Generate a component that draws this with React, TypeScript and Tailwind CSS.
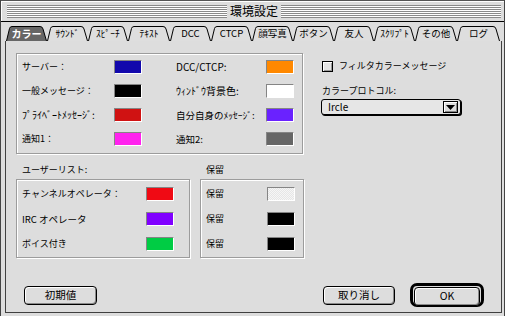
import React from 'react';

const tabs = [
  { label: 'カラー', w: 41, cls: 'w-[41px]', active: true },
  { label: 'ｻｳﾝﾄﾞ', w: 41, cls: 'w-[41px]' },
  { label: 'ｽﾋﾟｰﾁ', w: 40, cls: 'w-[40px]' },
  { label: 'ﾃｷｽﾄ', w: 42, cls: 'w-[42px]' },
  { label: 'DCC', w: 41, cls: 'w-[41px]' },
  { label: 'CTCP', w: 41, cls: 'w-[41px]' },
  { label: '顔写真', w: 41, cls: 'w-[41px]' },
  { label: 'ボタン', w: 41, cls: 'w-[41px]' },
  { label: '友人', w: 40, cls: 'w-[40px]' },
  { label: 'ｽｸﾘﾌﾟﾄ', w: 41, cls: 'w-[41px]' },
  { label: 'その他', w: 42, cls: 'w-[42px]' },
  { label: 'ログ', w: 43, cls: 'w-[43px]' },
];

// [label, label size, swatch, label, label size, swatch]
const colorRows = [
  ['サーバー：', 'text-[9px]', 'bg-[#1208ac]', 'DCC/CTCP:', 'text-[10px]', 'bg-[#ff8800]'],
  ['一般メッセージ：', 'text-[9px]', 'bg-black', 'ｳｨﾝﾄﾞｳ背景色:', 'text-[10px]', 'bg-white'],
  ['ﾌﾟﾗｲﾍﾞｰﾄﾒｯｾｰｼﾞ:', 'text-[10px]', 'bg-[#d01212]', '自分自身のﾒｯｾｰｼﾞ:', 'text-[9.5px]', 'bg-[#6a22ff]'],
  ['通知1：', 'text-[9px]', 'bg-[#ff22ee]', '通知2:', 'text-[9.5px]', 'bg-[#666666]'],
];

const userRows = [
  ['チャンネルオペレータ：', 'text-[9px]', 'bg-[#f00a14]'],
  ['IRC オペレータ', 'text-[9.5px]', 'bg-[#8000ff]'],
  ['ボイス付き', 'text-[9px]', 'bg-[#00cc44]'],
];

const holdRows = [
  ['保留', 'bg-[repeating-conic-gradient(#e6e6e6_0_25%,#f6f6f6_0_50%)] bg-[length:2px_2px]'],
  ['保留', 'bg-black'],
  ['保留', 'bg-black'],
];

function Swatch({ c }: { c: string }) {
  return (
    <div
      className={`h-[14px] w-[28px] border border-t-[#858585] border-l-[#858585] border-b-white border-r-white ${c}`}
    />
  );
}

function Tab({ label, w, cls, active }: { label: string; w: number; cls: string; active?: boolean }) {
  const d = `M0.5 15 L3.5 2.5 Q4 0.5 6 0.5 L${w - 7} 0.5 Q${w - 4.5} 0.5 ${w - 4} 3 L${w - 0.5} 15`;
  return (
    <div className={`relative flex h-[15px] items-center justify-center ${cls}`}>
      <svg className="absolute inset-0" width={w} height={15} viewBox={`0 0 ${w} 15`}>
        <path d={d} fill={active ? '#666666' : '#dedede'} stroke="#000" strokeWidth={1} />
      </svg>
      <span
        className={`relative pt-[1px] leading-none ${
          active ? 'text-[10px] font-bold text-white' : 'text-[9.5px] text-black'
        }`}
      >
        {label}
      </span>
    </div>
  );
}

function MacButton({ label, cls }: { label: string; cls: string }) {
  return (
    <div
      className={`flex h-[19px] items-center justify-center rounded-[4px] border border-black bg-[#dddddd] text-[10.5px] leading-none shadow-[inset_1px_1px_0_#fff,inset_-1px_-1px_0_#8a8a8a] ${cls}`}
    >
      {label}
    </div>
  );
}

const groupBox =
  'border border-[#9c9c9c] shadow-[1px_1px_0_#fff,inset_1px_1px_0_#fff]';

export default function App() {
  return (
    <div className="h-[316px] w-[505px] overflow-hidden border-x border-[#444] bg-[#dddddd] font-['Noto_Sans_CJK_JP','Noto_Sans',sans-serif] text-black">
      {/* title bar */}
      <div className="flex h-[22px] items-center border-y border-t-[#555] border-b-black pl-[6px] pr-[3px] shadow-[inset_1px_1px_0_#fff]">
        <div className="h-[13px] flex-1 bg-[repeating-linear-gradient(to_bottom,#8a8a8a_0px,#8a8a8a_1px,#ffffff_1px,#ffffff_2px)]" />
        <div className="px-[3px] text-[12px] leading-none">環境設定</div>
        <div className="h-[13px] flex-1 bg-[repeating-linear-gradient(to_bottom,#8a8a8a_0px,#8a8a8a_1px,#ffffff_1px,#ffffff_2px)]" />
      </div>

      {/* tabs */}
      <div className="ml-[5px] mt-[4px] flex">
        {tabs.map((t) => (
          <Tab key={t.label} {...t} />
        ))}
      </div>

      {/* panel */}
      <div className="ml-[4px] flex h-[272px] w-[497px] flex-col border-x border-b border-[#404040] pl-[10px] pt-[12px]">
        <div className="flex">
          <div className={`h-[101px] w-[287px] ${groupBox}`}>
            <div className="grid grid-cols-[92px_28px_34px_90px_28px] items-center gap-y-[10px] pl-[5px] pt-[6px] leading-[14px]">
              {colorRows.map((r) => (
                <React.Fragment key={r[0]}>
                  <span className={`whitespace-nowrap ${r[1]}`}>{r[0]}</span>
                  <Swatch c={r[2]} />
                  <span />
                  <span className={`whitespace-nowrap ${r[4]}`}>{r[3]}</span>
                  <Swatch c={r[5]} />
                </React.Fragment>
              ))}
            </div>
          </div>

          <div className="ml-[18px] flex flex-col pt-[7px] text-[9px] leading-[12px]">
            <div className="ml-[1px] flex items-center">
              <div className="h-[11px] w-[11px] border border-black bg-[#e4e4e4] shadow-[inset_1px_1px_0_#fff,inset_-1px_-1px_0_#999]" />
              <span className="ml-[6px]">フィルタカラーメッセージ</span>
            </div>
            <div className="ml-[1px] mt-[13px]">カラープロトコル:</div>
            <div className="mt-[2px] flex h-[16px] w-[140px] items-center rounded-[3px] border border-black bg-[#e6e6e6] shadow-[1px_1px_0_#000]">
              <span className="flex-1 pl-[6px] text-[10px] leading-none">Ircle</span>
              <div className="mr-[2px] flex h-[12px] w-[15px] items-center justify-center border border-black bg-[#dddddd] shadow-[inset_1px_1px_0_#fff,inset_-1px_-1px_0_#888]">
                <svg width="9" height="5" viewBox="0 0 9 5">
                  <path d="M0 0 H9 L4.5 5 Z" fill="#000" />
                </svg>
              </div>
            </div>
          </div>
        </div>

        <div className="mt-[10px] flex text-[9px]">
          <div className="flex w-[174px] flex-col">
            <div className="h-[12px] pl-[6px] leading-[12px]">ユーザーリスト:</div>
            <div className={`mt-[3px] h-[79px] ${groupBox}`}>
              <div className="flex flex-col gap-[11px] pl-[5px] pr-[15px] pt-[7px]">
                {userRows.map((r) => (
                  <div key={r[0]} className="flex items-center justify-between leading-[14px]">
                    <span className={r[1]}>{r[0]}</span>
                    <Swatch c={r[2]} />
                  </div>
                ))}
              </div>
            </div>
          </div>
          <div className="ml-[10px] flex w-[104px] flex-col">
            <div className="h-[12px] pl-[6px] leading-[12px]">保留</div>
            <div className={`mt-[3px] h-[79px] ${groupBox}`}>
              <div className="flex flex-col gap-[11px] pl-[5px] pr-[8px] pt-[7px]">
                {holdRows.map((r, i) => (
                  <div key={i} className="flex items-center justify-between leading-[14px]">
                    <span>{r[0]}</span>
                    <Swatch c={r[1]} />
                  </div>
                ))}
              </div>
            </div>
          </div>
        </div>

        <div className="mt-[25px] flex h-[24px] items-center pr-[17px]">
          <MacButton label="初期値" cls="ml-[8px] w-[73px]" />
          <div className="flex-1" />
          <MacButton label="取り消し" cls="w-[72px]" />
          <div className="ml-[15px] flex h-[24px] w-[74px] rounded-[7px] border-[3px] border-black p-[1px]">
            <MacButton label="OK" cls="h-[16px] flex-1 rounded-[3px]" />
          </div>
        </div>
      </div>
    </div>
  );
}
